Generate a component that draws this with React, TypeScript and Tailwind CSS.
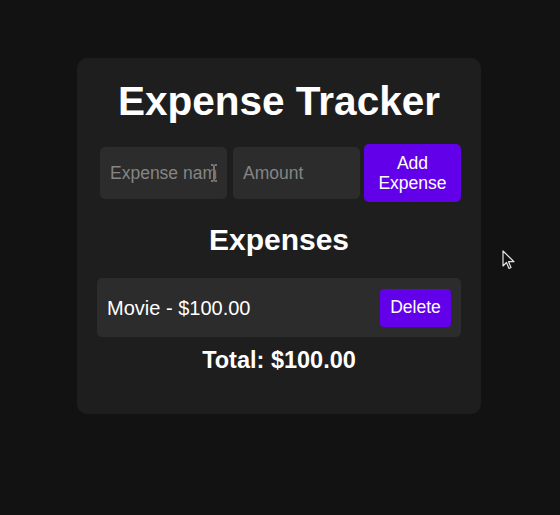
import { useState } from 'react';

type Expense = { name: string; amount: number };

export default function App() {
  const [expenses, setExpenses] = useState<Expense[]>([{ name: 'Movie', amount: 100 }]);
  const [name, setName] = useState('');
  const [amount, setAmount] = useState('');

  const total = expenses.reduce((sum, e) => sum + e.amount, 0);

  const addExpense = () => {
    const value = parseFloat(amount);
    if (!name || isNaN(value)) return;
    setExpenses([...expenses, { name, amount: value }]);
    setName('');
    setAmount('');
  };

  return (
    <div className="relative min-h-[515px] w-full bg-[#121212] pt-[58px] font-['Liberation_Sans',Arial,sans-serif] text-white">
      <div className="ml-[77px] flex w-[404px] flex-col items-center rounded-[10px] bg-[#1e1e1e] px-5 pt-5 pb-[41px]">
        <h1 className="text-[40.5px] leading-[46px] font-bold">Expense Tracker</h1>

        {/* Form */}
        <div className="mt-5 flex w-full items-center pl-[3px]">
          <div className="relative">
            <input
              value={name}
              onChange={(e) => setName(e.target.value)}
              placeholder="Expense name"
              className="h-[52px] w-[127px] rounded-[5px] bg-[#2c2c2c] px-[10px] text-[17.5px] text-white outline-none placeholder:text-[#858585]"
            />
            {/* text cursor over the field */}
            <svg
              width="8"
              height="18"
              viewBox="0 0 8 18"
              className="pointer-events-none absolute top-[17px] left-[110px]"
            >
              <path d="M1 1h2.5M4.5 1H7M4 1.5v15M1 17h2.5M4.5 17H7" stroke="#111" strokeWidth="2.2" fill="none" />
              <path d="M1 1h2.5M4.5 1H7M4 1.5v15M1 17h2.5M4.5 17H7" stroke="#ddd" strokeWidth="1" fill="none" />
            </svg>
          </div>
          <input
            value={amount}
            onChange={(e) => setAmount(e.target.value)}
            placeholder="Amount"
            className="ml-[6px] h-[52px] w-[127px] rounded-[5px] bg-[#2c2c2c] px-[10px] text-[17.5px] text-white outline-none placeholder:text-[#858585]"
          />
          <button
            onClick={addExpense}
            className="ml-[4px] h-[58px] w-[97px] rounded-[5px] bg-[#6200ea] text-[17.5px] leading-[20px] text-white"
          >
            Add
            <br />
            Expense
          </button>
        </div>

        <h2 className="mt-[21px] text-[30px] leading-[34px] font-bold">Expenses</h2>

        <ul className="mt-[21px] w-full">
          {expenses.map((expense, index) => (
            <li
              key={index}
              className="flex h-[59px] items-center justify-between rounded-[5px] bg-[#2c2c2c] px-[10px]"
            >
              <span className="text-[20px]">
                {expense.name} - ${expense.amount.toFixed(2)}
              </span>
              <button
                onClick={() => setExpenses(expenses.filter((_, i) => i !== index))}
                className="h-[38px] w-[71px] rounded-[4px] bg-[#6200ea] text-[17.5px] text-white"
              >
                Delete
              </button>
            </li>
          ))}
        </ul>

        <div className="mt-[10px] text-[23.5px] leading-[26px] font-bold">Total: ${total.toFixed(2)}</div>
      </div>

      {/* mouse pointer */}
      <svg width="14" height="20" viewBox="0 0 14 20" className="pointer-events-none absolute top-[250px] left-[502px]">
        <path
          d="M1 1v15l3.5-3.5 2.5 6 2-1-2.5-5.8H12z"
          fill="#111"
          stroke="#e5e5e5"
          strokeWidth="1.2"
          strokeLinejoin="round"
        />
      </svg>
    </div>
  );
}
